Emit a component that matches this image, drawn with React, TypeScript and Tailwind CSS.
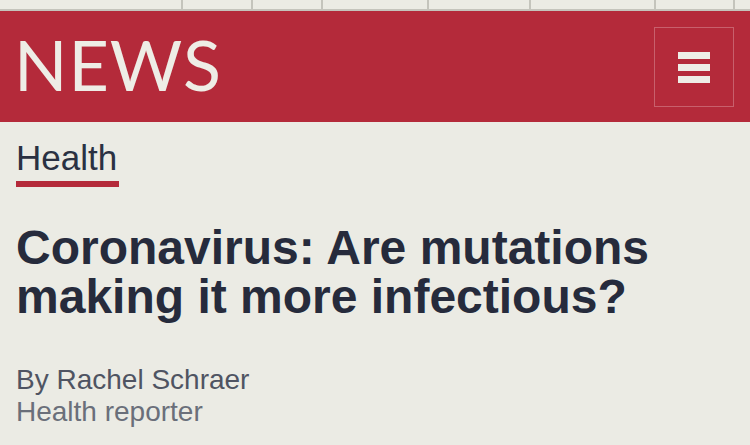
import React from "react";

const tabs = [181, 70, 70, 106, 102, 125, 79, 17];

const MenuButton = () => (
  <button className="flex h-[80px] w-[80px] flex-col items-center justify-center gap-[5px] border border-[#c8606c]">
    <span className="block h-[7px] w-[32px] bg-[#eeede6]" />
    <span className="block h-[7px] w-[32px] bg-[#eeede6]" />
    <span className="block h-[7px] w-[32px] bg-[#eeede6]" />
  </button>
);

export default function App() {
  return (
    <div className="min-h-[445px] w-[750px] overflow-hidden bg-[#ebebe4] font-['Liberation_Sans',Arial,sans-serif]">
      {/* top nav strip */}
      <div className="flex h-[11px] border-b-2 border-[#c4c4bc]">
        {tabs.map((w, i) => (
          <div
            key={i}
            style={{ width: w }}
            className={i === 0 ? "shrink-0" : "shrink-0 border-l-2 border-[#c4c4bc]"}
          />
        ))}
      </div>

      {/* masthead */}
      <header className="flex h-[111px] items-start justify-between bg-[#b42a3a] p-[16px]">
        <div className="ml-[-2px] mt-[-3px] font-['Lato',sans-serif] text-[70px] leading-[80px] tracking-[1px] text-[#eeede6]">
          NEWS
        </div>
        <MenuButton />
      </header>

      <main className="px-[16px]">
        <div className="mt-[16px]">
          <span className="inline-block border-b-[6px] border-[#b42a3a] pb-[3px] pr-[2px] text-[35px] leading-[40px] text-[#2a3142]">
            Health
          </span>
        </div>

        <h1 className="mt-[36px] text-[48px] font-bold leading-[49px] text-[#262b3c]">
          Coronavirus: Are mutations
          <br />
          making it more infectious?
        </h1>

        <div className="mt-[43px] text-[28px] leading-[32px]">
          <p className="text-[#4f5462]">By Rachel Schraer</p>
          <p className="text-[#6a6f7a]">Health reporter</p>
        </div>
      </main>
    </div>
  );
}
